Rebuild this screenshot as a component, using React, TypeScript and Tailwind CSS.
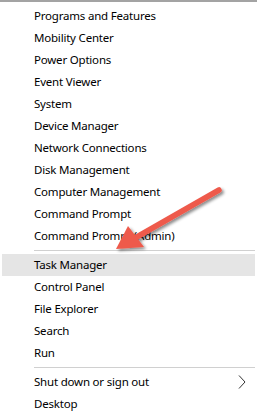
const topItems = [
  "Programs and Features",
  "Mobility Center",
  "Power Options",
  "Event Viewer",
  "System",
  "Device Manager",
  "Network Connections",
  "Disk Management",
  "Computer Management",
  "Command Prompt",
  "Command Prompt (Admin)",
];

const midItems = ["Task Manager", "Control Panel", "File Explorer", "Search", "Run"];

function MenuItem({ label, active, submenu }: { label: string; active?: boolean; submenu?: boolean }) {
  return (
    <div
      className={`mx-[2px] flex h-[22px] items-center justify-between pl-[32px] pr-[8px] text-[11.5px] tracking-[-0.2px] text-black ${
        active ? "bg-[#e5e5e5]" : ""
      }`}
    >
      <span>{label}</span>
      {submenu && (
        <svg width="8" height="14" viewBox="0 0 8 14" className="mr-[1px]">
          <polyline points="1,0.5 7,7 1,13.5" fill="none" stroke="#333" strokeWidth="1" />
        </svg>
      )}
    </div>
  );
}

function Separator() {
  return (
    <div className="flex h-[7px] items-center">
      <div className="ml-[34px] mr-[2px] h-px flex-1 bg-[#d0d0d0]" />
    </div>
  );
}

export default function App() {
  return (
    <div
      className="relative h-[419px] w-[257px] overflow-hidden border-t-2 border-[#a3a3a3] bg-white pt-[3px]"
      style={{ fontFamily: '"Noto Sans", "Open Sans", Arial, sans-serif' }}
    >
      {topItems.map((l) => (
        <MenuItem key={l} label={l} />
      ))}
      <Separator />
      {midItems.map((l) => (
        <MenuItem key={l} label={l} active={l === "Task Manager"} />
      ))}
      <Separator />
      <MenuItem label="Shut down or sign out" submenu />
      <MenuItem label="Desktop" />

      {/* annotation arrow */}
      <svg className="pointer-events-none absolute left-0 top-[-2px]" width="257" height="419">
        <defs>
          <filter id="sh" x="-20%" y="-20%" width="140%" height="140%">
            <feDropShadow dx="2" dy="2" stdDeviation="1.5" floodColor="#000" floodOpacity="0.45" />
          </filter>
        </defs>
        <g filter="url(#sh)">
          <line x1="219" y1="190" x2="135" y2="238" stroke="#ee5a4c" strokeWidth="5.5" strokeLinecap="round" />
          <polygon points="116,249 128,226 144,247" fill="#ee5a4c" />
        </g>
      </svg>
    </div>
  );
}
